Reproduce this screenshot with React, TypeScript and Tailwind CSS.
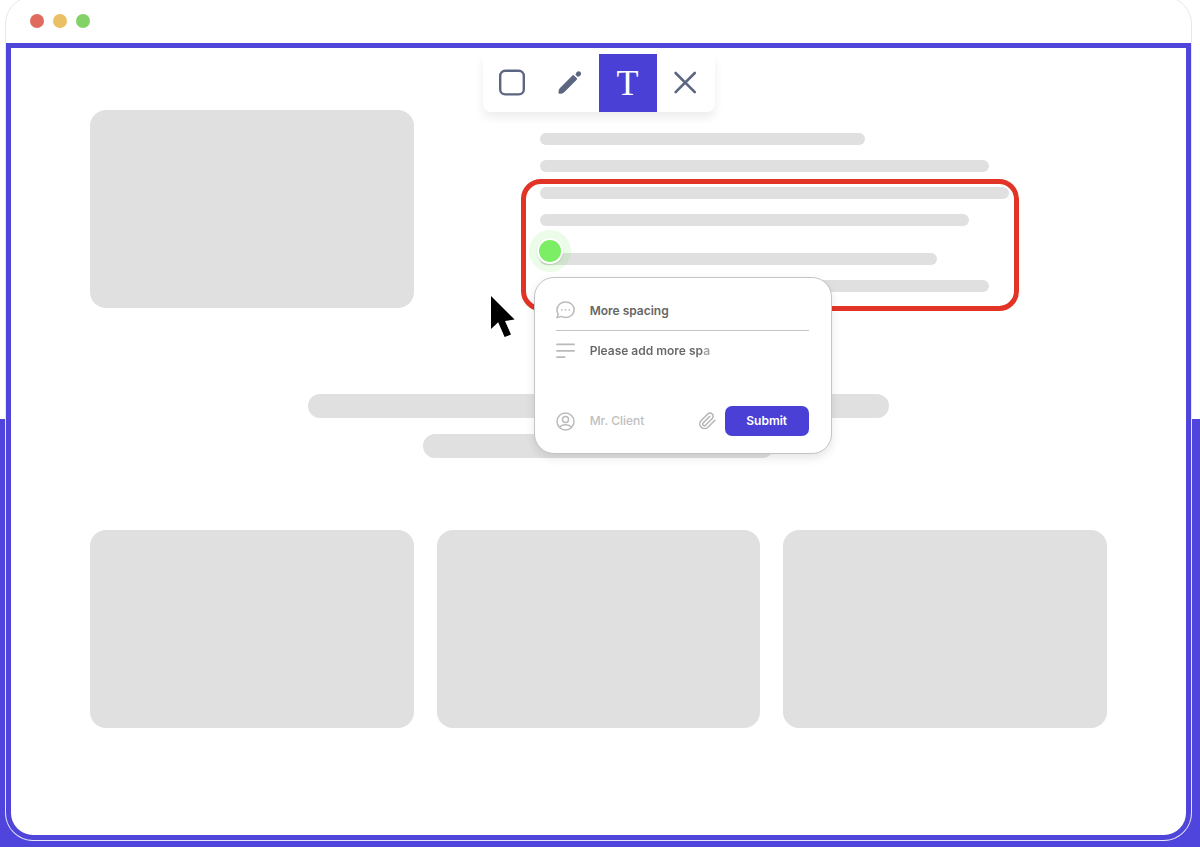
import { useState } from "react";
import type { ReactNode } from "react";
import clsx from "clsx";

type Tool = "box" | "pencil" | "text" | "close";

const tools: { id: Tool; label: string; icon: ReactNode }[] = [
  {
    id: "box",
    label: "Box",
    icon: (
      <svg width="28" height="28" viewBox="0 0 28 28" fill="none" stroke="currentColor" strokeWidth="2.4">
        <rect x="2.2" y="1.8" width="23.6" height="23.6" rx="5" />
      </svg>
    ),
  },
  {
    id: "pencil",
    label: "Draw",
    icon: (
      <svg width="28" height="28" viewBox="0 0 28 28" fill="currentColor">
        <path d="M16.4 6.4 Q17.2 5.7 18 6.4 L20.7 9.1 Q21.4 9.9 20.7 10.7 L8.2 23.2 Q6.8 24.6 5 24.7 L3.6 24.8 Q2.4 24.8 2.5 23.6 L2.6 22.2 Q2.7 20.3 4 19 Z" />
        <path d="M19.6 4.9 20.8 3 Q22.4 1.4 24.4 2.8 Q26 4.8 24.4 6.5 L22.5 7.8 Q21.8 8 21.2 7.4 L19.8 6 Q19.3 5.5 19.6 4.9Z" />
      </svg>
    ),
  },
  {
    id: "text",
    label: "Text",
    icon: <span className="font-['Liberation_Serif',serif] text-4xl leading-none">T</span>,
  },
  {
    id: "close",
    label: "Close",
    icon: (
      <svg width="28" height="28" viewBox="0 0 28 28" fill="none" stroke="currentColor" strokeWidth="2.6" strokeLinecap="round">
        <path d="M3.6 4 22.8 23.2M22.8 4 3.6 23.2" />
      </svg>
    ),
  },
];

function Bar({ className }: { className: string }) {
  return <div className={clsx("max-w-full rounded-full bg-[#e0e0e0]", className)} />;
}

function Block() {
  return <div className="h-[198px] rounded-2xl bg-[#e0e0e0]" />;
}

function Toolbar() {
  const [active, setActive] = useState<Tool>("text");

  return (
    <div className="absolute top-[6px] left-1/2 flex -translate-x-1/2 rounded-b-lg bg-white shadow-[0_6px_10px_rgba(0,0,0,0.07)]">
      {tools.map(({ id, label, icon }) => (
        <button
          key={id}
          type="button"
          aria-label={label}
          onClick={() => setActive(id)}
          className={clsx(
            "flex size-[58px] items-center justify-center",
            active === id ? "bg-[#4b40d6] text-white" : "text-[#5d6680]"
          )}
        >
          {icon}
        </button>
      ))}
    </div>
  );
}

function CommentForm() {
  const [title, setTitle] = useState("More spacing");
  const [comment, setComment] = useState("Please add more spa");

  return (
    <form
      onSubmit={(e) => e.preventDefault()}
      className="absolute top-[90px] -left-[6px] w-[298px] rounded-[20px] border border-[#c4c4c4] bg-white pt-[22px] pr-[22px] pb-[17px] pl-[21px] text-xs font-semibold text-[#666666] shadow-[0_4px_10px_rgba(0,0,0,0.1)]"
    >
      <div className="flex h-[31px] items-start gap-[15px] border-b border-[#c4c4c4]">
        <label htmlFor="title" className="flex h-5 items-center text-[#bababa]">
          <svg width="19" height="19" viewBox="0 0 19 19" fill="none" stroke="currentColor" strokeWidth="1.5" strokeLinejoin="round">
            <path d="M1 16.6 2.2 13.2C1.3 11.9 1 10.4 1 8.8 1 4.3 4.8 1 9.6 1S18.2 4.4 18.2 8.8 14.4 16.4 9.8 16.4C8.3 16.4 6.6 16 5.4 15.4Z" />
            <g fill="currentColor" stroke="none">
              <circle cx="5.9" cy="8.8" r="0.9" />
              <circle cx="9.6" cy="8.8" r="0.9" />
              <circle cx="13.3" cy="8.8" r="0.9" />
            </g>
          </svg>
        </label>
        <input
          id="title"
          aria-label="Title"
          value={title}
          onChange={(e) => setTitle(e.target.value)}
          className="h-5 min-w-0 flex-1 outline-none"
        />
      </div>
      <div className="flex items-start gap-[15px] pt-[10px]">
        <label htmlFor="comment" className="flex h-5 items-center text-[#bababa]">
          <svg width="19" height="19" viewBox="0 0 19 19" fill="none" stroke="currentColor" strokeWidth="1.8" strokeLinecap="round">
            <path d="M1 2.4H18M1 8.8H18M1 15.2H8.6" />
          </svg>
        </label>
        <textarea
          id="comment"
          aria-label="Comment"
          value={comment}
          onChange={(e) => setComment(e.target.value)}
          className="h-[55px] min-w-0 flex-1 resize-none bg-[linear-gradient(90deg,#666666_113px,#a0a0a0_113px)] bg-clip-text leading-5 text-transparent outline-none"
        />
      </div>
      <div className="mt-[10px] flex h-[30px] items-center">
        <label htmlFor="name" className="mr-[15px] text-[#bababa]">
          <svg width="19" height="19" viewBox="0 0 19 19" fill="none" stroke="currentColor" strokeWidth="1.5">
            <circle cx="9.5" cy="9.5" r="8.5" />
            <circle cx="9.5" cy="7.4" r="3" />
            <path d="M3.6 15.4C5 13.6 7 12.8 9.5 12.8S14 13.6 15.4 15.4" />
          </svg>
        </label>
        <input
          id="name"
          aria-label="Name"
          placeholder="Mr. Client"
          className="min-w-0 flex-1 font-medium outline-none placeholder:text-[#c0c0c0]"
        />
        <button type="button" aria-label="Attach file" className="mr-2 text-[#b4b4b4]">
          <svg width="19" height="20" viewBox="0 0 24 24" fill="none" stroke="currentColor" strokeWidth="1.9" strokeLinecap="round" strokeLinejoin="round">
            <path d="m21.4 11.1-9.2 9.1a6 6 0 0 1-8.5-8.4l8.6-8.6a4 4 0 1 1 5.7 5.7l-8.6 8.5a2 2 0 0 1-2.9-2.8l8.5-8.5" />
          </svg>
        </button>
        <button type="submit" className="h-[30px] w-[84px] rounded-[7px] bg-[#4b40d6] text-white">
          Submit
        </button>
      </div>
    </form>
  );
}

function MarkedArea() {
  return (
    <div className="relative mt-[15px] w-[469px]">
      <div className="space-y-[15px]">
        <Bar className="h-3 w-[469px]" />
        <Bar className="h-3 w-[429px]" />
      </div>
      <div className="mt-[27px] space-y-[15px]">
        <Bar className="h-3 w-[397px]" />
        <Bar className="h-3 w-[449px]" />
      </div>

      <div className="absolute -top-[8px] -right-[10px] -bottom-[19px] -left-[19px] rounded-[20px] border-5 border-[#e23327]" />

      <div className="absolute top-[43px] -left-[11px] flex size-[42px] items-center justify-center rounded-full bg-[#7bee66]/15">
        <div className="size-[26px] rounded-full border-2 border-white bg-[#7bee66] shadow-[0_1px_2px_rgba(0,0,0,0.12)]" />
      </div>

      <CommentForm />

      <svg className="absolute top-[109px] -left-[49px]" width="24" height="42" viewBox="0 0 24 42">
        <path d="M0 0 23.6 23.6 14 25 20 38.6 13.6 41 7.2 26.2 0 33Z" fill="#000" />
      </svg>
    </div>
  );
}

export default function App() {
  return (
    <div className="flex min-h-screen bg-[linear-gradient(#ffffff_49.5%,#4f45dc_49.5%)] pr-2 pb-[6px] pl-[5px] font-['Inter',sans-serif]">
      <div className="-mt-1 flex flex-1 flex-col rounded-[28px] border border-[#e6e5f5] bg-white">
        <div className="flex h-[46px] shrink-0 items-center gap-[9px] px-6 pt-[2px]">
          <span className="size-[14px] rounded-full bg-[#df6a5d]" />
          <span className="size-[14px] rounded-full bg-[#e9c063]" />
          <span className="size-[14px] rounded-full bg-[#82d267]" />
        </div>

        <main className="relative flex-1 rounded-b-[27px] border-5 border-[#4f45d8] px-[79px] pt-[62px] pb-[107px]">
          <div className="grid grid-cols-3 gap-[23px]">
            <Block />
            <div className="col-span-2 pt-[23px] pl-[103px]">
              <div className="space-y-[15px]">
                <Bar className="h-3 w-[325px]" />
                <Bar className="h-3 w-[449px]" />
              </div>
              <MarkedArea />
            </div>
          </div>

          <div className="mt-[86px] flex flex-col items-center gap-4">
            <Bar className="h-6 w-[581px]" />
            <Bar className="h-6 w-[351px]" />
          </div>

          <div className="mt-[72px] grid grid-cols-3 gap-[23px]">
            <Block />
            <Block />
            <Block />
          </div>

          <Toolbar />
        </main>
      </div>
    </div>
  );
}
